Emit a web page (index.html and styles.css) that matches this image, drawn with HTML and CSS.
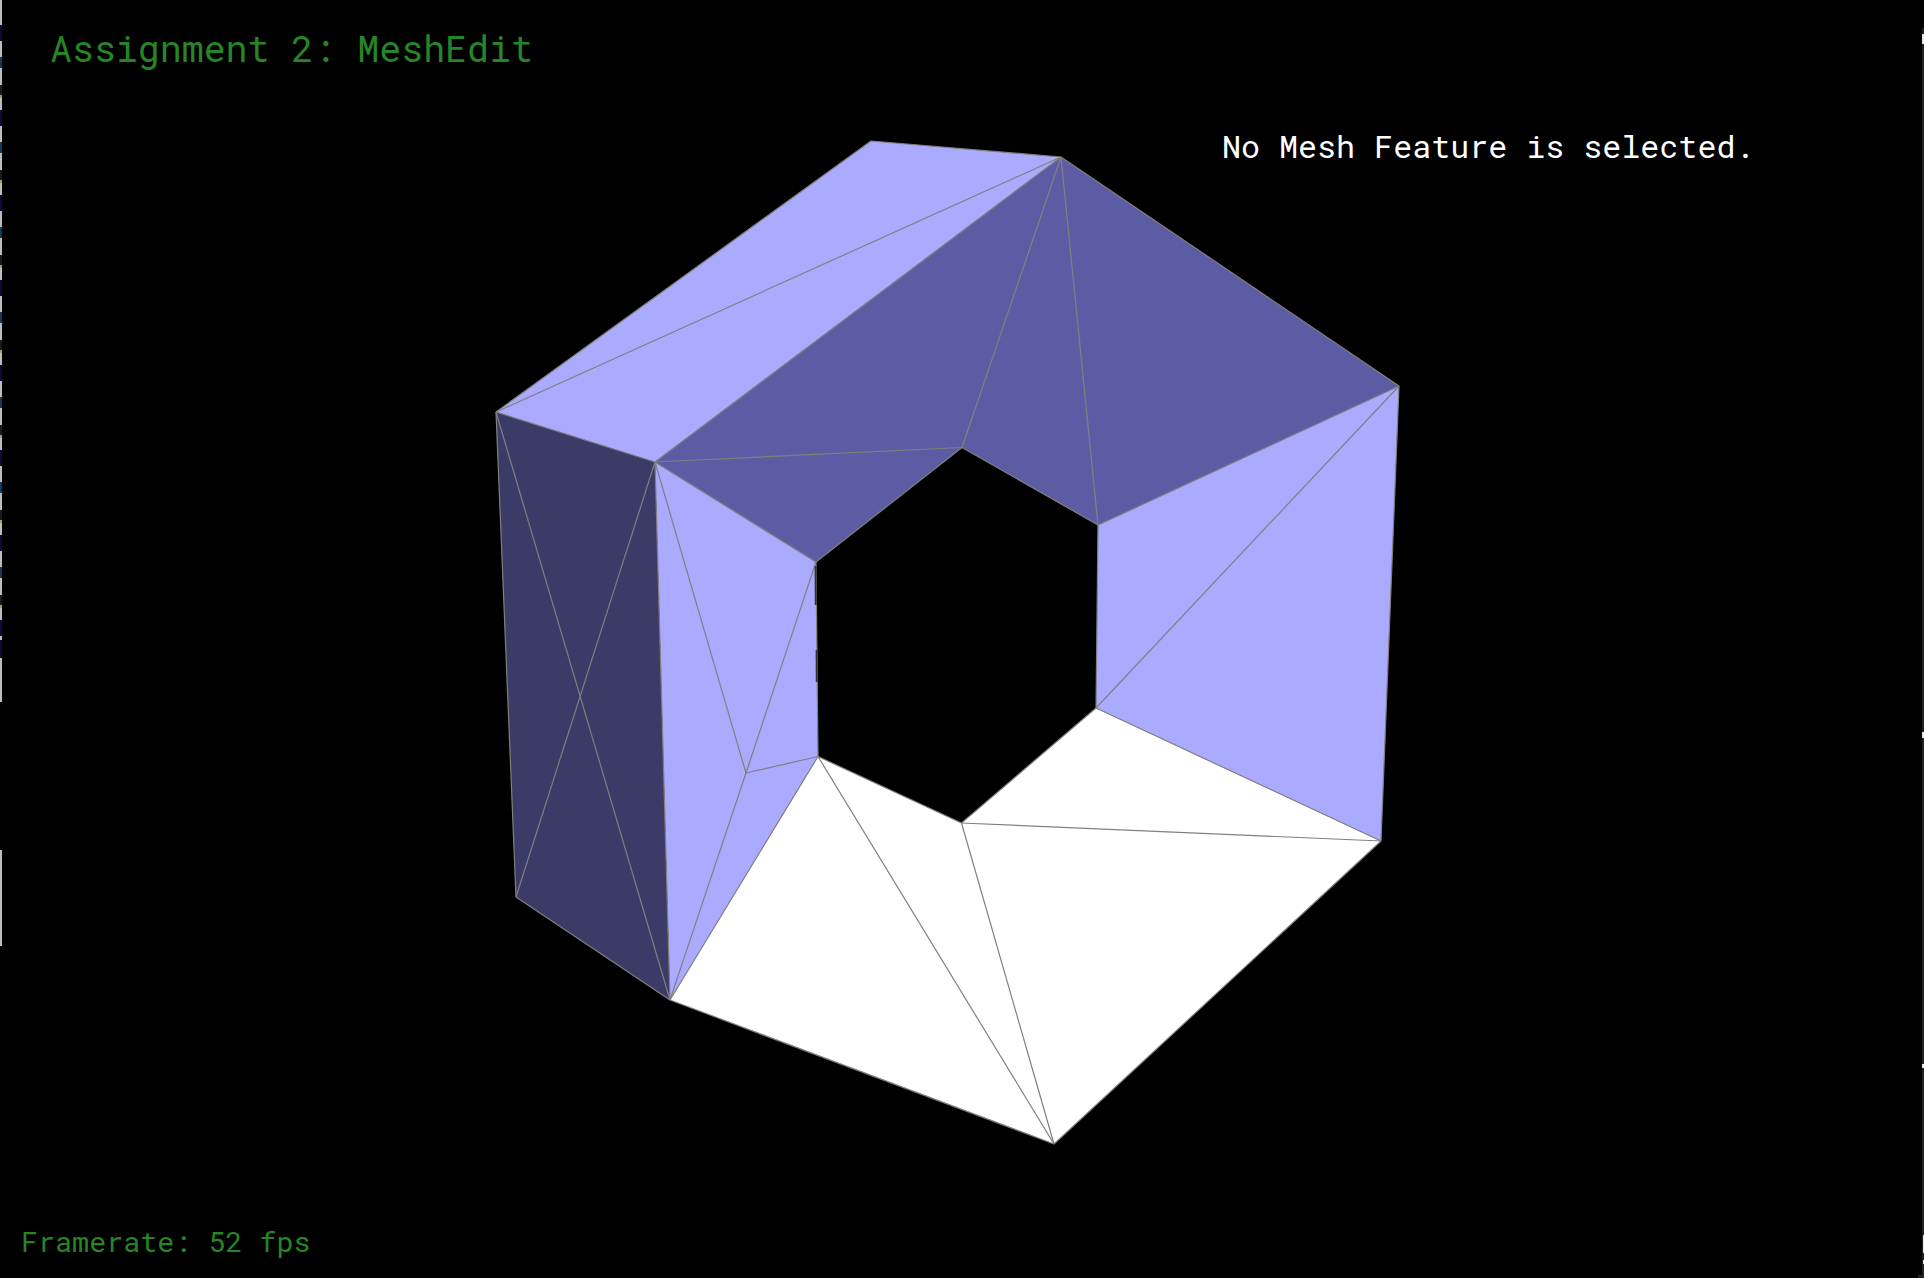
FILE: index.html
```html
<!DOCTYPE html>
<html lang="en">
<head>
<meta charset="utf-8">
<title>Assignment 2: MeshEdit</title>
<link rel="stylesheet" href="styles.css">
</head>
<body>
<main class="viewer">
  <svg class="scene" width="1924" height="1278" viewBox="0 0 1924 1278" aria-label="Mesh view">
    <defs>
      <pattern id="stripTile" width="3" height="85" patternUnits="userSpaceOnUse">
        <rect class="strip-gray" x="0" y="0" width="2" height="85"/>
        <rect class="strip-dark" x="0" y="0" width="2" height="10"/>
        <rect class="strip-yellow" x="0" y="10" width="2" height="3"/>
        <rect class="strip-navy" x="0" y="25" width="2" height="16"/>
        <rect class="strip-blue" x="0" y="57" width="2" height="11"/>
      </pattern>
    </defs>

    <!-- glitched window edges -->
    <rect class="strip-tile" x="0" y="0" width="2" height="702"/>
    <rect class="strip-gray" x="0" y="0" width="2" height="25"/>
    <rect class="strip-navy" x="0" y="640" width="2" height="18"/>
    <rect class="strip-gray" x="0" y="658" width="2" height="44"/>
    <rect class="strip-gray" x="0" y="850" width="2" height="96"/>
    <rect class="edge-dark" x="1922" y="28" width="2" height="1250"/>
    <rect class="edge-bright" x="1922" y="34" width="2" height="10"/>
    <rect class="edge-bright" x="1922" y="732" width="2" height="6"/>
    <rect class="edge-bright" x="1922" y="1064" width="2" height="4"/>
    <rect class="edge-bright" x="1923" y="1235" width="1" height="18"/>
    <rect class="edge-bright" x="1923" y="1260" width="1" height="4"/>
    <rect class="edge-dark" x="1918" y="1275" width="4" height="3"/>

    <!-- faces -->
    <g class="face-light">
      <polygon points="871,141 1061,157 655,462 496,412"/>
      <polygon points="655,462 816,562 818,756.5 670,1000"/>
      <polygon points="1399,386 1381,841 1096,708 1098,525"/>
    </g>
    <g class="face-mid">
      <polygon points="655,462 1061,157 1399,386 1098,525 962,447.5 816,562"/>
    </g>
    <g class="face-dark">
      <polygon points="496,412 655,462 670,1000 516,897"/>
    </g>
    <g class="face-white">
      <polygon points="670,1000 818,756.5 961.5,823 1096,708 1381,841 1054,1144"/>
    </g>

    <!-- edges -->
    <g class="edges">
      <line x1="871" y1="141" x2="496" y2="412"/>
      <line x1="871" y1="141" x2="1061" y2="157"/>
      <line x1="496" y1="412" x2="1061" y2="157"/>
      <line x1="496" y1="412" x2="655" y2="462"/>
      <line x1="655" y1="462" x2="1061" y2="157"/>
      <line x1="1061" y1="157" x2="962" y2="447.5"/>
      <line x1="1061" y1="157" x2="1098" y2="525"/>
      <line x1="1061" y1="157" x2="1399" y2="386"/>
      <line x1="1399" y1="386" x2="1098" y2="525"/>
      <line x1="962" y1="447.5" x2="1098" y2="525"/>
      <line x1="655" y1="462" x2="962" y2="447.5"/>
      <line x1="655" y1="462" x2="816" y2="562"/>
      <line x1="816" y1="562" x2="962" y2="447.5"/>
      <line x1="1399" y1="386" x2="1096" y2="708"/>
      <line x1="1098" y1="525" x2="1096" y2="708"/>
      <line x1="1399" y1="386" x2="1381" y2="841"/>
      <line x1="1096" y1="708" x2="1381" y2="841"/>
      <line x1="1096" y1="708" x2="961.5" y2="823"/>
      <line x1="961.5" y1="823" x2="1381" y2="841"/>
      <line x1="1381" y1="841" x2="1054" y2="1144"/>
      <line x1="961.5" y1="823" x2="1054" y2="1144"/>
      <line x1="818" y1="756.5" x2="1054" y2="1144"/>
      <line x1="818" y1="756.5" x2="961.5" y2="823"/>
      <line x1="1054" y1="1144" x2="670" y2="1000"/>
      <line x1="670" y1="1000" x2="818" y2="756.5"/>
      <line x1="655" y1="462" x2="746" y2="773"/>
      <line x1="816" y1="562" x2="746" y2="773"/>
      <line x1="746" y1="773" x2="818" y2="756.5"/>
      <line x1="746" y1="773" x2="670" y2="1000"/>
      <line x1="655" y1="462" x2="670" y2="1000"/>
      <line x1="816" y1="562" x2="818" y2="756.5"/>
      <line x1="496" y1="412" x2="516" y2="897"/>
      <line x1="516" y1="897" x2="670" y2="1000"/>
      <line x1="496" y1="412" x2="670" y2="1000"/>
      <line x1="516" y1="897" x2="655" y2="462"/>
    </g>
    <g class="edges-dark">
      <line x1="815.6" y1="566" x2="815.8" y2="605"/>
      <line x1="816.6" y1="650" x2="816.8" y2="682"/>
    </g>
  </svg>

  <h1 class="label title">Assignment 2: MeshEdit</h1>
  <p class="label selection">No Mesh Feature is selected.</p>
  <p class="label framerate">Framerate: 52 fps</p>
</main>
</body>
</html>
```

FILE: styles.css
```css
html, body {
  margin: 0;
  padding: 0;
  background: #000;
  overflow: hidden;
}

.viewer {
  position: relative;
  width: 1924px;
  height: 1278px;
  background: #000;
  overflow: hidden;
}

.scene {
  display: block;
}

.strip-tile { fill: url(#stripTile); }
.strip-gray { fill: #bdbdbd; }
.strip-dark { fill: #1a1a22; }
.strip-yellow { fill: #a89a60; }
.strip-navy { fill: #0a0a3c; }
.strip-blue { fill: #123a5c; }
.edge-dark { fill: #222; }
.edge-bright { fill: #e8e8e8; }

.face-light { fill: #aaaaff; }
.face-mid { fill: #5c5ca5; }
.face-dark { fill: #3c3a66; }
.face-white { fill: #fff; }

.edges line {
  stroke: #808080;
  stroke-width: 1.2;
}

.edges-dark line {
  stroke: #333;
  stroke-width: 2;
}

.label {
  position: absolute;
  margin: 0;
  font-family: "Roboto Mono", "DejaVu Sans Mono", "Liberation Mono", monospace;
  font-weight: 400;
  line-height: 1;
  white-space: pre;
}

.title {
  left: 50px;
  top: 30px;
  font-size: 36.6px;
  color: #268626;
}

.selection {
  left: 1222px;
  top: 131px;
  font-size: 31.7px;
  color: #fff;
}

.framerate {
  left: 21px;
  top: 1227px;
  font-size: 28.4px;
  color: #268626;
}
```
